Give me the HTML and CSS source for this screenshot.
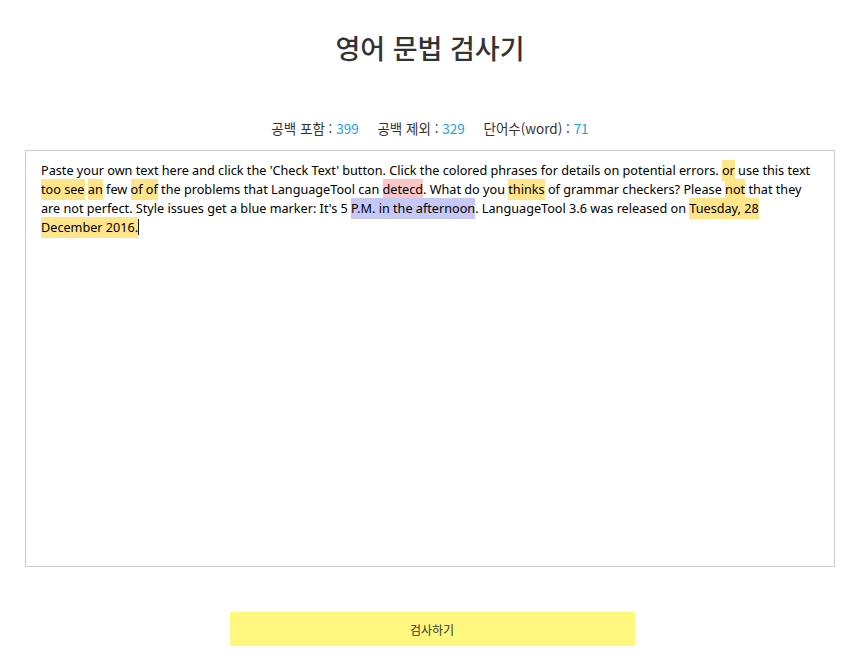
FILE: index.html
```html
<!DOCTYPE html>
<html lang="ko">
<head>
<meta charset="utf-8">
<link rel="stylesheet" href="styles.css">
</head>
<body>
<div class="page">
  <h1 class="title">영어 문법 검사기</h1>
  <div class="stats">
    <span class="stat">공백 포함 : <span class="num">399</span></span>
    <span class="stat">공백 제외 : <span class="num">329</span></span>
    <span class="stat">단어수(word) : <span class="num">71</span></span>
  </div>
  <div class="editor">
    <p class="text">Paste your own text here and click the 'Check Text' button. Click the colored phrases for details on potential errors. <span class="hl y">or</span> use this text<br><span class="hl y">too see</span> <span class="hl y">an</span> few <span class="hl y">of of</span> the problems that LanguageTool can <span class="hl r">detecd</span>. What do you <span class="hl y">thinks</span> of grammar checkers? Please <span class="hl y">not</span> that they<br>are not perfect. Style issues get a blue marker: It's 5 <span class="hl b">P.M. in the afternoon</span>. LanguageTool 3.6 was released on <span class="hl y">Tuesday, 28 </span><br><span class="hl y">December 2016.</span><span class="caret"></span></p>
  </div>
  <div class="actions">
    <button class="check">검사하기</button>
  </div>
</div>
</body>
</html>
```

FILE: styles.css
```css
html, body {
  margin: 0;
  padding: 0;
  background: #fff;
}
.page {
  font-family: "Noto Sans CJK KR", "Noto Sans", sans-serif;
  color: #333;
  padding: 0 20px 0 25px;
}
.title {
  margin: 0;
  padding-top: 28px;
  height: 40px;
  font-size: 27px;
  line-height: 40px;
  font-weight: 500;
  text-align: center;
  color: #333;
}
.stats {
  margin-top: 50px;
  text-align: center;
  font-size: 13.5px;
  line-height: 20px;
  color: #333;
  padding-left: 0;
}
.stat {
  margin: 0 7.5px;
}
.num {
  color: #1aa3e8;
}
.editor {
  margin-top: 12px;
  height: 395px;
  border: 1px solid #cccccc;
  padding: 10px 15px;
  box-sizing: content-box;
  width: 778px;
}
.text {
  margin: 0;
  font-family: "Noto Sans", "Noto Sans CJK KR", sans-serif;
  font-size: 12.66px;
  line-height: 19px;
  color: #000;
  white-space: nowrap;
}
.hl {
  padding: 1px 0 2px;
}
.y { background: #ffe58a; }
.r { background: #f9c7c7; }
.b { background: #c6c8f6; }
.caret {
  display: inline-block;
  width: 1px;
  height: 16px;
  background: #111;
  vertical-align: -3px;
}
.actions {
  margin-top: 45px;
  display: flex;
  justify-content: center;
  padding-left: 4px;
}
.check {
  width: 405px;
  height: 34px;
  border: none;
  background: #fef87f;
  font-family: "Noto Sans CJK KR", sans-serif;
  font-size: 12px;
  color: #333;
}
```
